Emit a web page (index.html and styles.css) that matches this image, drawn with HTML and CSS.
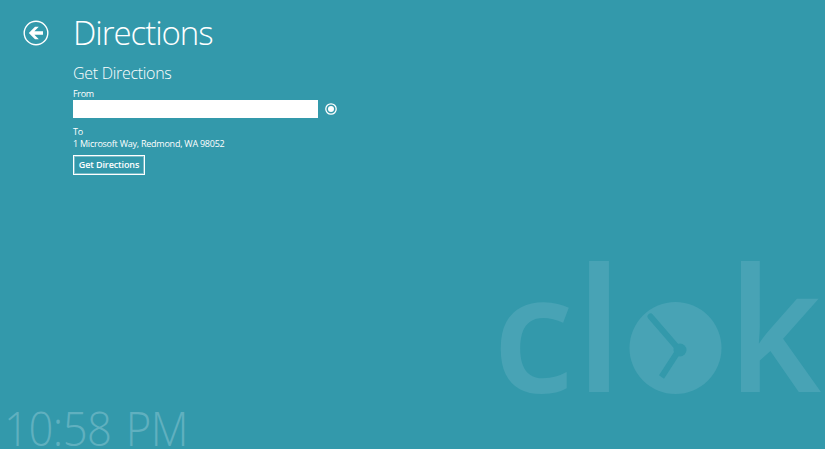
FILE: index.html
```html
<!DOCTYPE html>
<html lang="en">
<head>
<meta charset="utf-8">
<title>Directions</title>
<link rel="stylesheet" href="styles.css">
</head>
<body>
<div class="app">
  <svg class="brand" viewBox="0 0 335 199" aria-label="clok">
    <text class="brand-text brand-c" x="2.5" y="142">c</text>
    <text class="brand-text" x="85" y="142">l</text>
    <text class="brand-text" transform="translate(237.5 142) scale(.955 1)">k</text>
    <circle class="clock-face" cx="185.5" cy="98" r="46"/>
    <path class="clock-hand" d="M160.500 66.500L189 99.500"/>
    <path class="clock-hand hour" d="M189 100L171.500 127"/>
    <circle class="clock-pin" cx="190" cy="100" r="6.5"/>
  </svg>
  <header class="header">
    <button class="back" aria-label="Back">
      <svg width="26" height="26" viewBox="0 0 26 26">
        <circle cx="13" cy="13" r="11.8" fill="none" stroke="#fff" stroke-width="1.4"/>
        <path d="M5.8 13L12 6.8H15.8L11.4 11.3H20V14.7H11.4L15.8 19.2H12Z" fill="#fff"/>
      </svg>
    </button>
    <h1 class="title">Directions</h1>
  </header>
  <main class="content">
    <h2 class="subtitle">Get Directions</h2>
    <label class="label" for="from">From</label>
    <div class="field">
      <input class="input" id="from" type="text">
      <svg class="locate" width="12" height="12" viewBox="0 0 12 12">
        <circle cx="6" cy="6" r="5.2" fill="none" stroke="#fff" stroke-width="1.3"/>
        <circle cx="6" cy="6" r="3" fill="#fff"/>
      </svg>
    </div>
    <div class="label to">To</div>
    <div class="address">1 Microsoft Way, Redmond, WA 98052</div>
    <button class="submit">Get Directions</button>
  </main>
  <div class="time">10:58 PM</div>
</div>
</body>
</html>
```
FILE: styles.css
```css
* { box-sizing: border-box; }
body { margin: 0; background: #3399ab; color: #fff; font-family: "Open Sans", "Noto Sans", sans-serif; overflow: hidden; }
.app { position: relative; width: 825px; height: 449px; }
.brand { position: absolute; left: 490px; top: 250px; width: 335px; height: 199px; overflow: visible; }
.brand-text { font-size: 172px; font-weight: 600; fill: #48a3b5; }
.brand-c { font-size: 164px; }
.clock-face { fill: #48a3b5; }
.clock-hand { fill: none; stroke: #3399ab; stroke-width: 6; stroke-linecap: round; }
.hour { stroke-linecap: butt; }
.clock-pin { fill: #3399ab; }
.header { display: flex; align-items: center; height: 58px; padding: 7px 0 0 23px; }
.back { width: 26px; height: 26px; padding: 0; border: 0; background: none; }
.back svg { display: block; }
.title { margin: 0 0 0 24px; font-size: 33px; line-height: 40px; font-weight: 300; letter-spacing: -1.05px; }
.content { padding-left: 73px; }
.subtitle { margin: 5px 0 0; font-size: 16px; line-height: 20px; font-weight: 300; letter-spacing: -0.3px; }
.label { display: block; margin-top: 5px; font-size: 9px; line-height: 12px; letter-spacing: -0.3px; }
.field { display: flex; align-items: center; gap: 7px; }
.input { width: 245px; height: 18px; padding: 0 4px; border: 0; border-radius: 0; background: #fff; }
.to { margin-top: 8px; }
.address { font-size: 9px; line-height: 12px; letter-spacing: -0.24px; }
.submit { display: block; width: 72px; height: 20px; margin-top: 5px; padding: 0; border: 1.5px solid #fff; background: none; color: #fff; font: 600 9px/14px "Open Sans", sans-serif; letter-spacing: -0.1px; outline: 1px solid rgba(255, 255, 255, 0.35); outline-offset: -2px; }
.time { position: absolute; left: 4px; top: 404px; font-size: 48px; line-height: 48px; height: 45px; font-weight: 300; color: #60b0bf; white-space: nowrap; letter-spacing: -0.6px; word-spacing: 4px; transform: scaleX(0.91); transform-origin: left top; }
```
